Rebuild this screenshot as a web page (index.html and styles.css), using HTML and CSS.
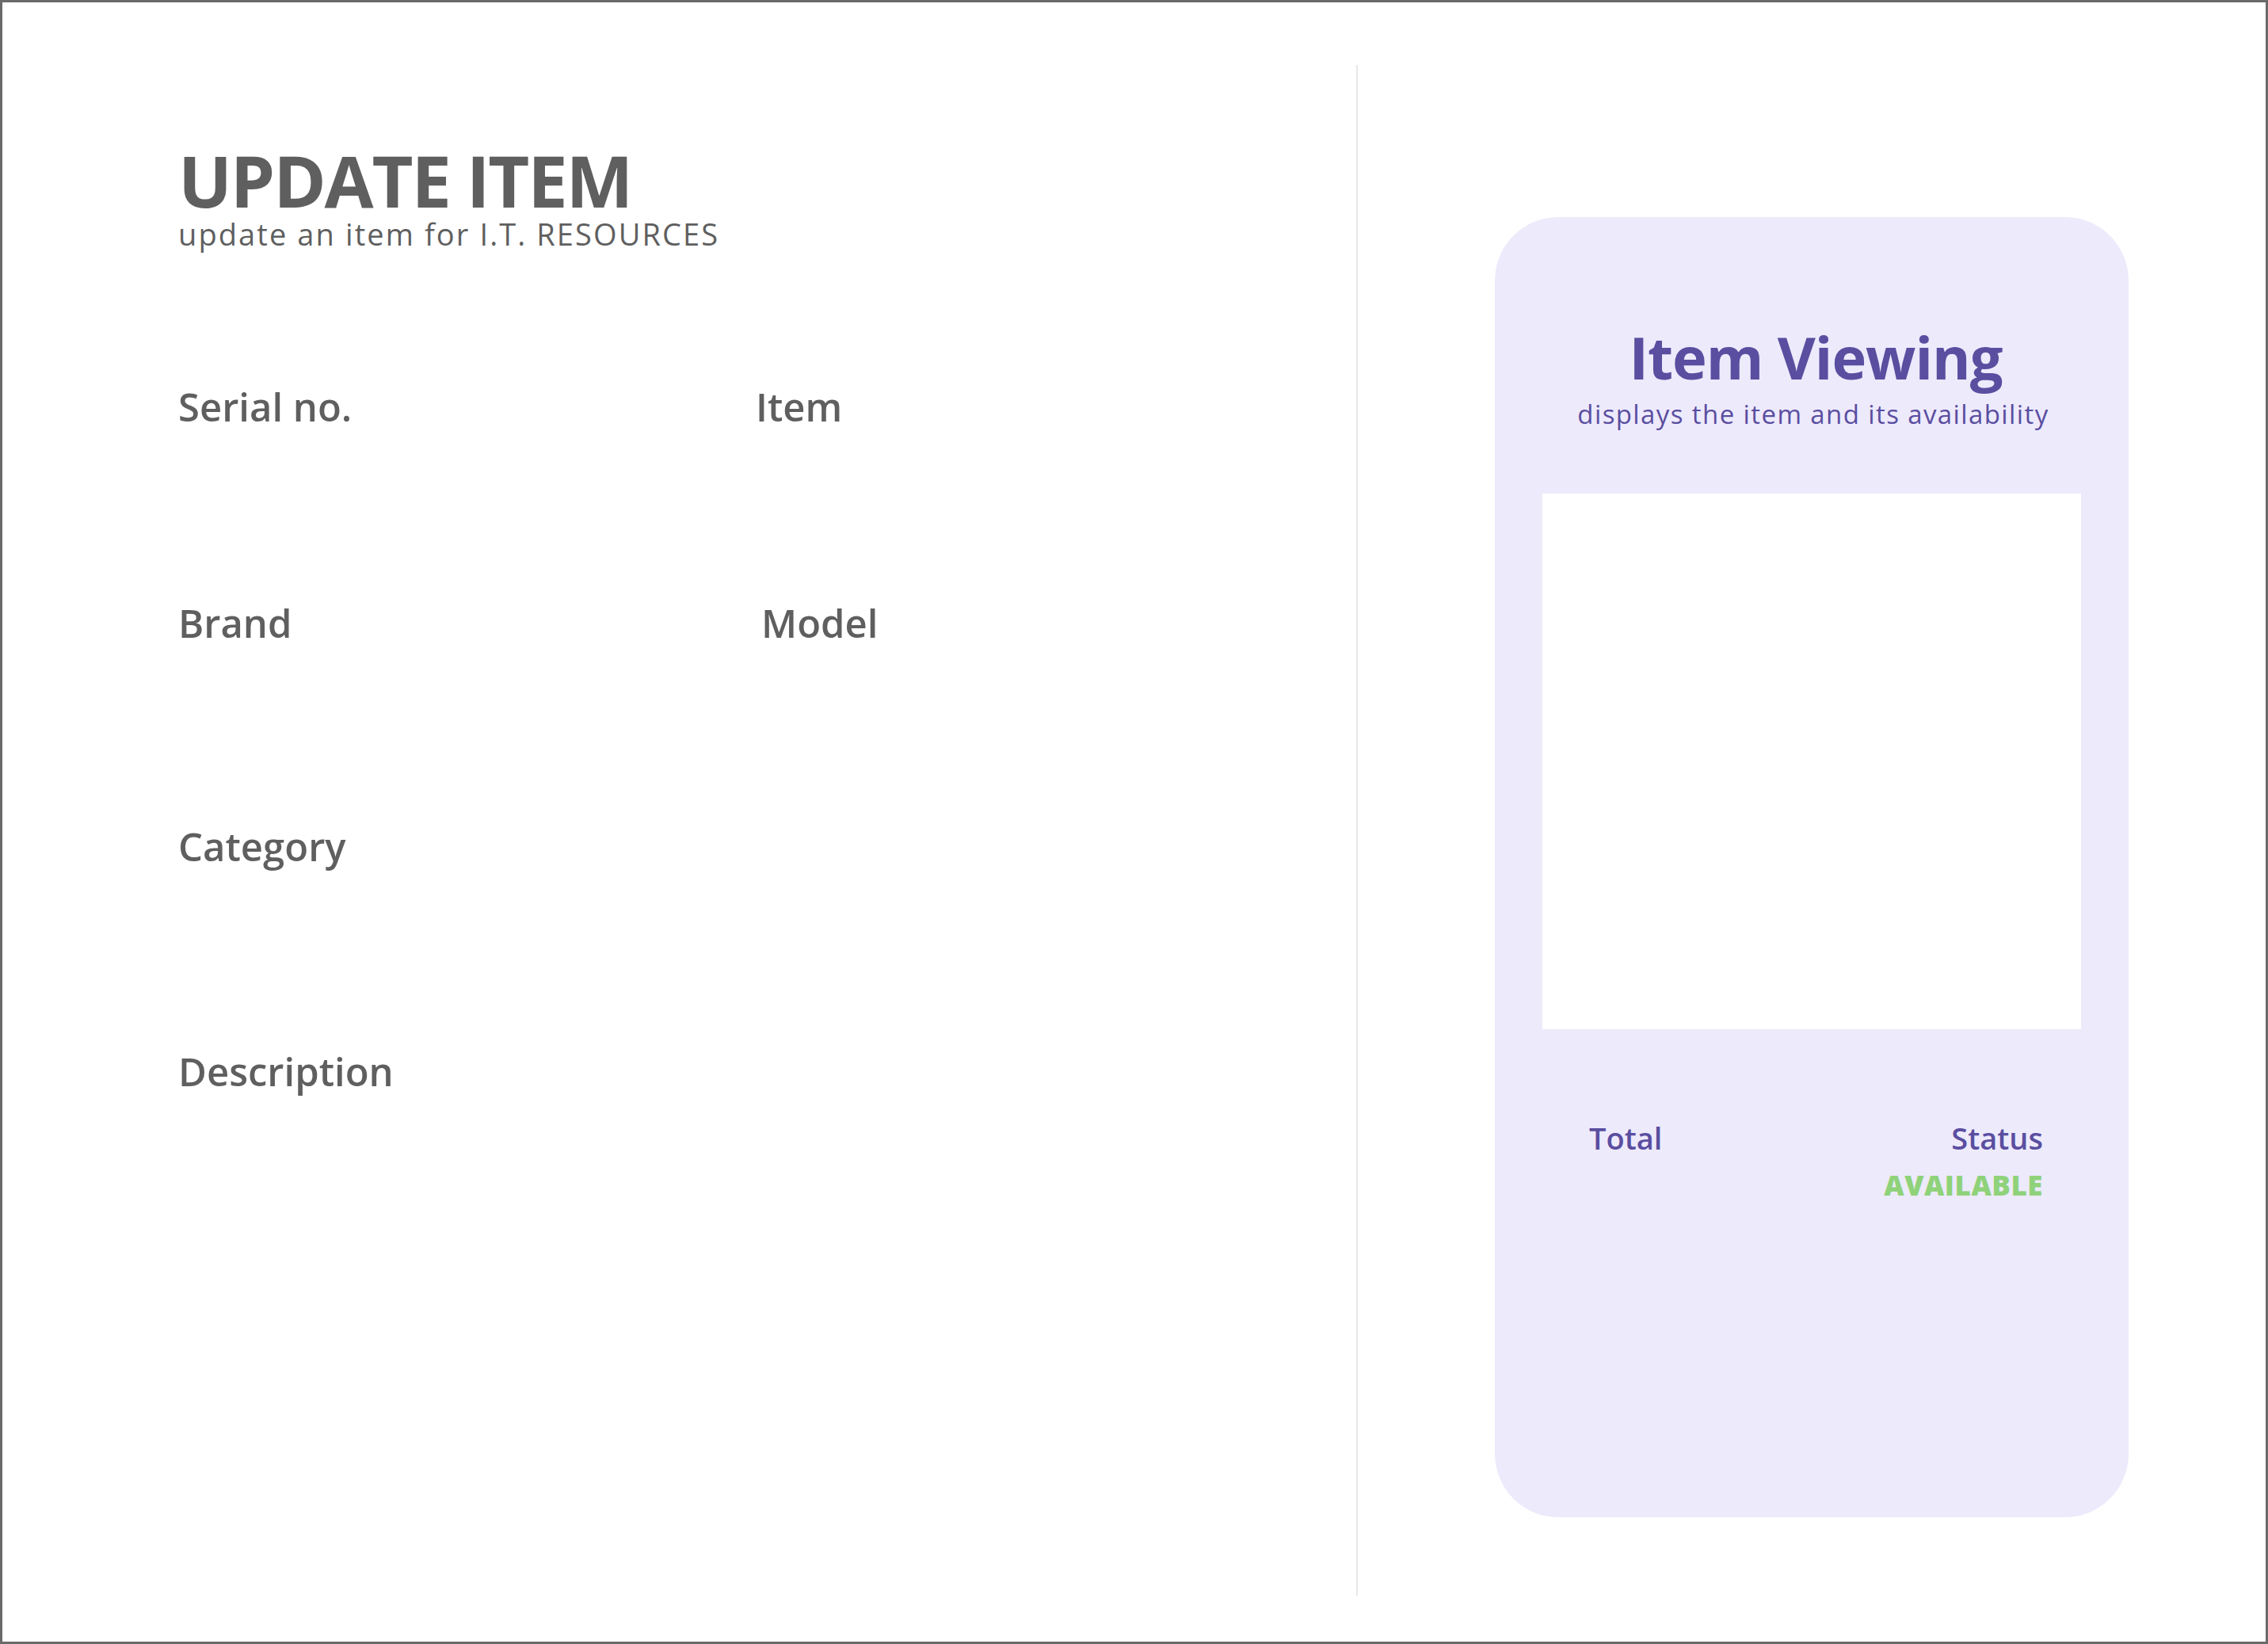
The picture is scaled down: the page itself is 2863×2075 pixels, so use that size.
FILE: index.html
```html
<!DOCTYPE html>
<html lang="en">
<head>
<meta charset="utf-8">
<title>Update Item</title>
<link rel="stylesheet" href="styles.css">
</head>
<body>
<div class="frame">
  <section class="left">
    <h1 class="title">UPDATE ITEM</h1>
    <p class="subtitle">update an item for I.T. RESOURCES</p>
    <div class="form">
      <div class="row row-1">
        <label class="label col-a">Serial no.</label>
        <label class="label col-b">Item</label>
      </div>
      <div class="row row-2">
        <label class="label col-a">Brand</label>
        <label class="label col-b col-b-model">Model</label>
      </div>
      <div class="row row-3">
        <label class="label col-a">Category</label>
      </div>
      <div class="row row-4">
        <label class="label col-a">Description</label>
      </div>
    </div>
  </section>
  <div class="divider"></div>
  <section class="right">
    <div class="card">
      <h2 class="card-title">Item Viewing</h2>
      <p class="card-sub">displays the item and its availability</p>
      <div class="preview"></div>
      <div class="card-footer">
        <div class="stat">
          <span class="stat-label">Total</span>
        </div>
        <div class="stat stat-right">
          <span class="stat-label">Status</span>
          <span class="stat-value">AVAILABLE</span>
        </div>
      </div>
    </div>
  </section>
</div>
</body>
</html>
```

FILE: styles.css
```css
html, body {
  margin: 0;
  padding: 0;
  background: #ffffff;
}

.frame {
  box-sizing: border-box;
  width: 2863px;
  height: 2075px;
  border: 3px solid #6a6a6a;
  display: flex;
  font-family: "Open Sans", "Noto Sans", sans-serif;
}

.left {
  box-sizing: border-box;
  width: 1709px;
  padding: 179px 0 0 222px;
}

.title {
  margin: 0;
  font-size: 90px;
  line-height: 90px;
  font-weight: 700;
  color: #5f5f5f;
  letter-spacing: -2.2px;
}

.subtitle {
  margin: 4px 0 0;
  font-size: 38px;
  line-height: 38px;
  font-weight: 400;
  color: #5f5f5f;
  letter-spacing: 2.1px;
}

.form {
  margin-top: 174px;
}

.row {
  display: flex;
  height: 50px;
}

.row-2 { margin-top: 223px; }
.row-3 { margin-top: 232px; }
.row-4 { margin-top: 234px; }

.label {
  font-size: 49px;
  line-height: 50px;
  font-weight: 600;
  color: #5f5f5f;
}

.col-a {
  width: 729px;
}

.col-b-model {
  margin-left: 7px;
}

.divider {
  width: 2px;
  background: #e8e8e8;
  margin: 79px 0 58px;
}

.right {
  flex: 1;
  display: flex;
  justify-content: center;
  align-items: flex-start;
  padding-top: 271px;
}

.card {
  box-sizing: border-box;
  width: 800px;
  height: 1641px;
  border-radius: 80px;
  background: #edeafc;
  display: flex;
  flex-direction: column;
  align-items: center;
  padding-top: 140px;
}

.card-title {
  margin: 0 0 0 10px;
  font-size: 74px;
  line-height: 74px;
  font-weight: 700;
  color: #5a4ea0;
  letter-spacing: -1px;
}

.card-sub {
  margin: 18px 0 0 4px;
  font-size: 33px;
  line-height: 33px;
  font-weight: 400;
  color: #5a4ea0;
  letter-spacing: 1.4px;
}

.preview {
  margin-top: 84px;
  width: 680px;
  height: 676px;
  background: #ffffff;
}

.card-footer {
  box-sizing: border-box;
  width: 100%;
  margin-top: 118px;
  padding: 0 108px 0 119px;
  display: flex;
  justify-content: space-between;
  align-items: flex-start;
}

.stat {
  display: flex;
  flex-direction: column;
}

.stat-right {
  align-items: flex-end;
}

.stat-label {
  font-size: 38px;
  line-height: 38px;
  font-weight: 600;
  color: #5a4ea0;
}

.stat-value {
  margin-top: 23px;
  font-size: 35px;
  line-height: 35px;
  font-weight: 800;
  color: #8fd27a;
  letter-spacing: 0.5px;
}
```
